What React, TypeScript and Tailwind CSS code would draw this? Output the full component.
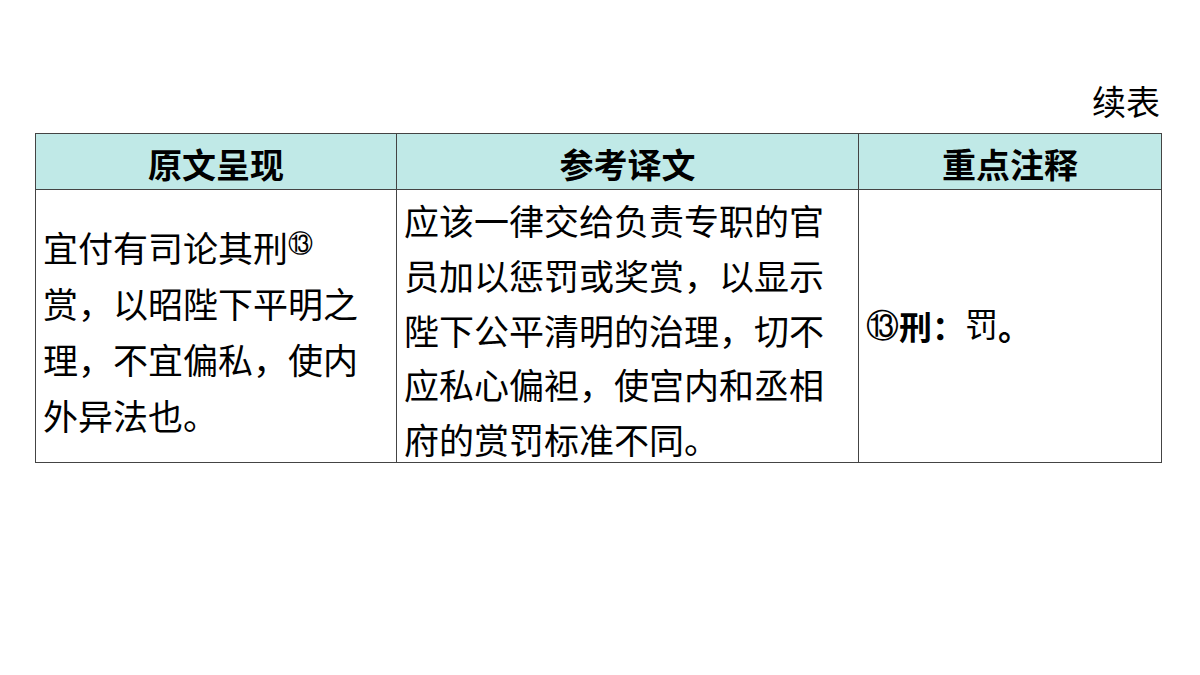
const cjk = { fontFamily: '"Noto Sans CJK SC", sans-serif' };

const App = () => {
  return (
    <div className="w-[1200px] h-[675px] bg-white text-black" style={cjk}>
      <div className="ml-[35px] w-[1126px] pt-[80px]">
        <div className="text-right text-[34px] leading-[42px] pr-[1px]">续表</div>
        <table className="mt-[11px] w-[1126px] border-collapse table-fixed">
          <colgroup>
            <col className="w-[361px]" />
            <col className="w-[462px]" />
            <col className="w-[303px]" />
          </colgroup>
          <thead>
            <tr className="h-[56px] bg-[#c0e9e7]">
              <th className="border border-[#444] text-[34px] leading-[40px] font-bold pt-[4px]">原文呈现</th>
              <th className="border border-[#444] text-[34px] leading-[40px] font-bold pt-[4px]">参考译文</th>
              <th className="border border-[#444] text-[34px] leading-[40px] font-bold pt-[4px]">重点注释</th>
            </tr>
          </thead>
          <tbody>
            <tr>
              <td className="border border-[#444] p-0 align-top">
                <div className="h-[272px] flex flex-col justify-center pl-[7px] pt-[6px] text-[35px] leading-[56px] whitespace-nowrap">
                  <div>
                    宜付有司论其刑
                    <span className="text-[25px] align-[10px]" style={{ fontFamily: '"DejaVu Serif", serif' }}>⑬</span>
                  </div>
                  <div>赏，以昭陛下平明之</div>
                  <div>理，不宜偏私，使内</div>
                  <div>外异法也。</div>
                </div>
              </td>
              <td className="border border-[#444] p-0 align-top">
                <div className="h-[272px] pl-[7px] pt-[3px] text-[35px] leading-[54.75px] whitespace-nowrap">
                  <div>应该一律交给负责专职的官</div>
                  <div>员加以惩罚或奖赏，以显示</div>
                  <div>陛下公平清明的治理，切不</div>
                  <div>应私心偏袒，使宫内和丞相</div>
                  <div>府的赏罚标准不同。</div>
                </div>
              </td>
              <td className="border border-[#444] p-0 align-top">
                <div className="h-[272px] flex items-center pl-[7px] text-[33px] leading-[40px]">
                  <span style={{ fontFamily: '"DejaVu Serif", serif' }}>⑬</span>
                  <span className="font-bold">刑：</span>
                  <span className="font-normal" style={{ fontFamily: '"Liberation Serif", "Noto Sans CJK SC", serif' }}>罚</span>
                  <span className="font-bold">。</span>
                </div>
              </td>
            </tr>
          </tbody>
        </table>
      </div>
    </div>
  );
};

export default App;
